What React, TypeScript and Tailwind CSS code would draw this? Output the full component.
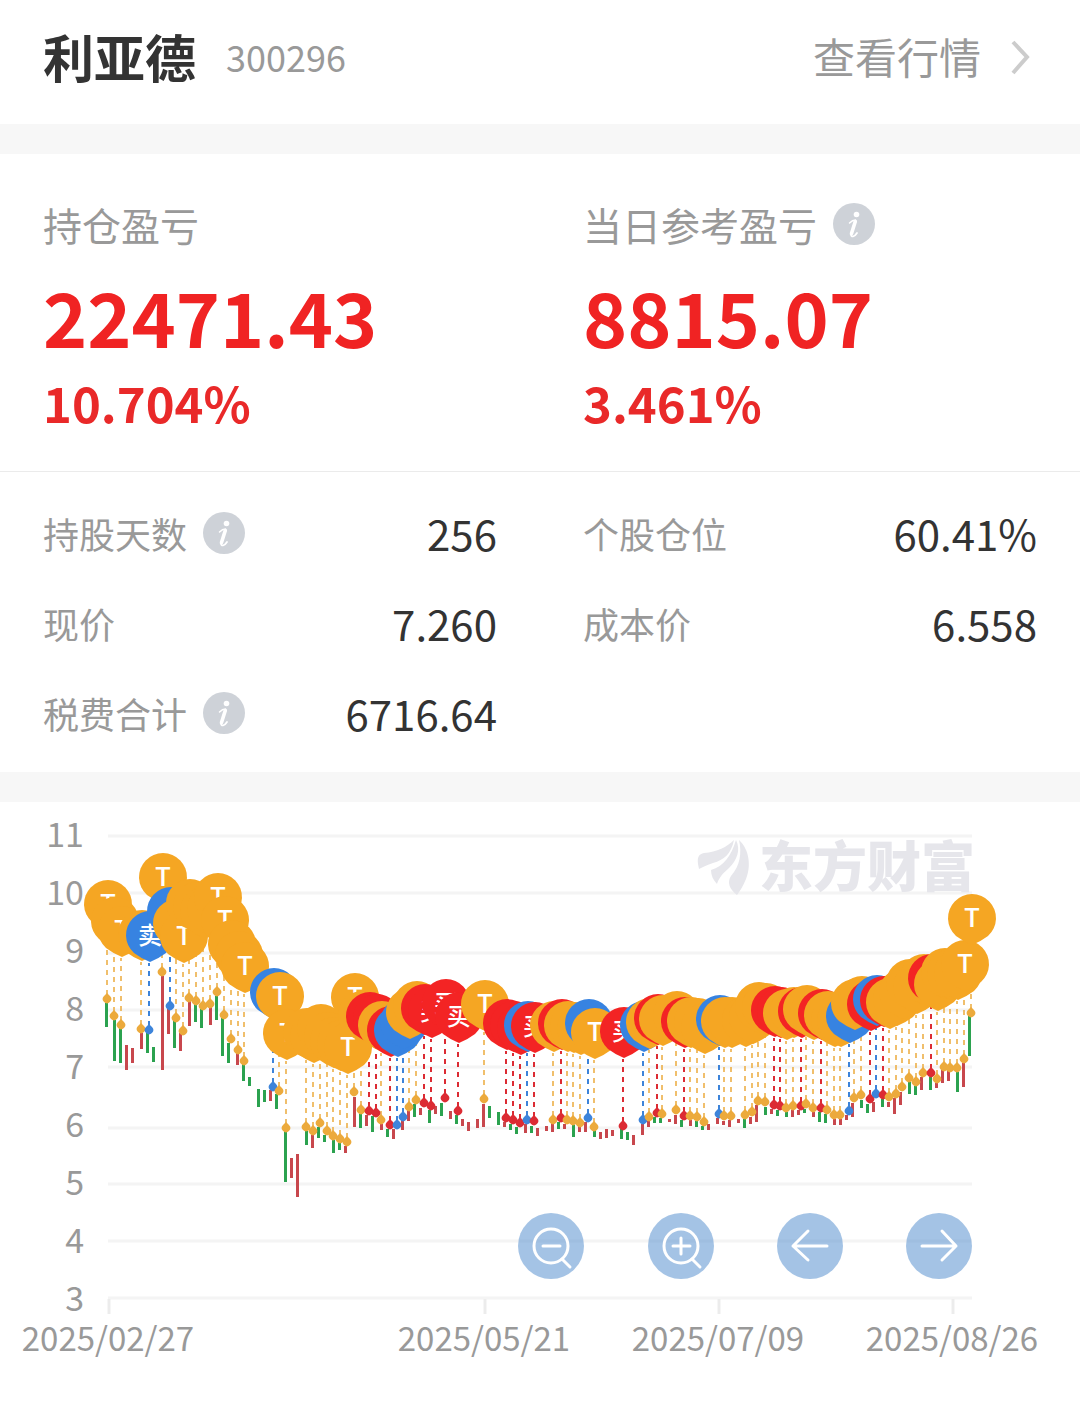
import React from "react";

type Side = "T" | "B" | "S";
type Tone = "r" | "g";

// Session bars: [x, top, bottom, tone]
const bars: [number, number, number, Tone][] = [
  [107, 1003, 1027, "g"], [115, 1020, 1061, "g"], [121, 1028, 1063, "g"], [127, 1045, 1070, "r"],
  [133, 1048, 1063, "r"], [142, 1033, 1049, "r"], [148, 1033, 1053, "g"], [154, 1047, 1062, "g"],
  [163, 976, 1070, "r"], [169, 1008, 1034, "r"], [175, 1021, 1048, "g"], [181, 1033, 1051, "r"],
  [190, 1001, 1026, "r"], [196, 1003, 1022, "g"], [202, 1008, 1028, "g"], [211, 1007, 1025, "r"],
  [217, 996, 1020, "g"], [223, 1018, 1056, "g"], [229, 1043, 1063, "g"], [238, 1053, 1065, "r"],
  [244, 1064, 1081, "g"], [250, 1077, 1086, "g"], [259, 1089, 1107, "g"], [265, 1090, 1102, "g"],
  [271, 1090, 1101, "r"], [277, 1094, 1109, "g"], [286, 1131, 1182, "g"], [292, 1158, 1178, "r"],
  [298, 1154, 1197, "r"], [307, 1131, 1145, "g"], [313, 1135, 1148, "r"], [319, 1127, 1138, "g"],
  [325, 1135, 1142, "g"], [334, 1140, 1153, "g"], [340, 1143, 1150, "g"], [346, 1146, 1153, "r"],
  [355, 1097, 1127, "r"], [361, 1114, 1128, "g"], [367, 1115, 1126, "r"], [373, 1116, 1132, "g"],
  [382, 1124, 1130, "r"], [388, 1129, 1137, "g"], [394, 1129, 1139, "r"], [403, 1120, 1130, "r"],
  [409, 1110, 1121, "r"], [415, 1104, 1117, "g"], [421, 1108, 1115, "r"], [430, 1110, 1123, "g"],
  [436, 1106, 1114, "r"], [442, 1103, 1116, "g"], [451, 1111, 1119, "r"], [457, 1115, 1124, "g"],
  [463, 1119, 1126, "r"], [469, 1122, 1131, "r"], [478, 1119, 1128, "r"], [484, 1104, 1127, "r"],
  [490, 1106, 1118, "g"], [499, 1112, 1125, "g"], [505, 1122, 1127, "r"], [511, 1124, 1130, "g"],
  [517, 1127, 1134, "g"], [526, 1124, 1133, "r"], [532, 1126, 1133, "g"], [538, 1128, 1136, "r"],
  [547, 1126, 1131, "r"], [553, 1123, 1132, "r"], [559, 1122, 1129, "g"], [565, 1124, 1129, "r"],
  [574, 1125, 1137, "g"], [580, 1126, 1132, "r"], [586, 1122, 1132, "r"], [595, 1130, 1137, "g"],
  [601, 1132, 1139, "r"], [607, 1129, 1138, "r"], [613, 1130, 1136, "r"], [622, 1129, 1139, "g"],
  [628, 1132, 1140, "g"], [634, 1135, 1145, "r"], [643, 1124, 1135, "r"], [649, 1121, 1127, "r"],
  [655, 1117, 1123, "g"], [661, 1118, 1123, "g"], [670, 1119, 1122, "r"], [676, 1115, 1124, "r"],
  [682, 1120, 1127, "g"], [691, 1120, 1126, "r"], [697, 1121, 1127, "g"], [703, 1126, 1130, "g"],
  [709, 1124, 1130, "r"], [718, 1118, 1124, "r"], [724, 1121, 1125, "r"], [730, 1120, 1127, "r"],
  [739, 1119, 1123, "r"], [745, 1119, 1128, "g"], [751, 1117, 1124, "r"], [757, 1105, 1122, "r"],
  [766, 1107, 1115, "g"], [772, 1109, 1114, "r"], [778, 1110, 1116, "g"], [787, 1112, 1117, "g"],
  [793, 1110, 1117, "r"], [799, 1110, 1115, "r"], [805, 1109, 1113, "g"], [814, 1112, 1117, "r"],
  [820, 1112, 1122, "g"], [826, 1114, 1123, "g"], [835, 1119, 1125, "r"], [841, 1119, 1125, "r"],
  [847, 1115, 1120, "r"], [853, 1103, 1117, "r"], [862, 1100, 1108, "g"], [868, 1104, 1113, "g"],
  [874, 1102, 1112, "r"], [883, 1099, 1107, "g"], [889, 1102, 1107, "r"], [895, 1098, 1114, "r"],
  [901, 1092, 1105, "r"], [910, 1082, 1094, "g"], [916, 1086, 1095, "g"], [922, 1077, 1090, "r"],
  [931, 1077, 1090, "g"], [937, 1083, 1088, "r"], [943, 1070, 1083, "r"], [949, 1071, 1081, "r"],
  [958, 1072, 1092, "g"], [964, 1063, 1087, "r"], [970, 1016, 1056, "g"],
];

// Trade marks: [x, y of the session high, side]
const trades: [number, number, Side][] = [
  [107, 999, "T"], [114, 1016, "T"], [121, 1025, "T"], [141, 1029, "T"], [149, 1030, "S"],
  [162, 972, "T"], [170, 1006, "S"], [176, 1018, "T"], [183, 1031, "T"], [189, 998, "T"],
  [196, 1001, "T"], [203, 1006, "T"], [210, 1004, "T"], [217, 992, "T"], [224, 1015, "T"],
  [231, 1039, "T"], [238, 1050, "T"], [244, 1061, "T"], [273, 1087, "S"], [279, 1091, "T"],
  [286, 1128, "T"], [306, 1127, "T"], [313, 1131, "T"], [320, 1123, "T"], [327, 1131, "T"],
  [333, 1136, "T"], [340, 1139, "T"], [347, 1142, "T"], [354, 1092, "T"], [361, 1110, "T"],
  [369, 1111, "B"], [376, 1113, "B"], [381, 1120, "T"], [390, 1125, "B"], [397, 1125, "S"],
  [403, 1117, "S"], [409, 1107, "T"], [416, 1100, "T"], [424, 1103, "B"], [431, 1106, "B"],
  [445, 1098, "B"], [458, 1111, "B"], [484, 1099, "T"], [506, 1118, "B"], [513, 1120, "B"],
  [520, 1123, "B"], [527, 1120, "S"], [534, 1121, "B"], [553, 1120, "T"], [561, 1118, "B"],
  [567, 1120, "T"], [573, 1121, "T"], [580, 1123, "T"], [588, 1118, "S"], [594, 1127, "T"],
  [623, 1126, "B"], [643, 1120, "S"], [649, 1117, "T"], [657, 1113, "B"], [662, 1114, "T"],
  [676, 1110, "T"], [684, 1116, "B"], [690, 1116, "T"], [697, 1117, "T"], [704, 1122, "T"],
  [719, 1114, "S"], [724, 1116, "T"], [731, 1116, "T"], [745, 1115, "T"], [752, 1112, "T"],
  [758, 1101, "T"], [765, 1102, "T"], [774, 1105, "B"], [780, 1106, "B"], [786, 1108, "T"],
  [793, 1106, "T"], [801, 1106, "B"], [806, 1104, "T"], [813, 1108, "T"], [821, 1108, "B"],
  [827, 1110, "T"], [834, 1115, "T"], [840, 1115, "T"], [849, 1111, "S"], [854, 1098, "T"],
  [861, 1095, "T"], [870, 1099, "B"], [876, 1094, "S"], [883, 1095, "B"], [889, 1097, "T"],
  [896, 1094, "T"], [902, 1087, "T"], [909, 1078, "T"], [916, 1082, "T"], [923, 1073, "T"],
  [931, 1073, "B"], [937, 1079, "T"], [944, 1067, "T"], [950, 1068, "T"], [957, 1068, "T"],
  [964, 1059, "T"], [971, 1013, "T"],
];

const gridLines = [836, 893, 953, 1010, 1067, 1128, 1184, 1241, 1298];
const dates: [number, string][] = [
  [108, "2025/02/27"], [484, "2025/05/21"], [718, "2025/07/09"], [952, "2025/08/26"],
];

const pinFill: Record<Side, string> = { T: "#f5a623", B: "#f32424", S: "#3783e1" };
const stemFill: Record<Side, string> = { T: "#ecaa3c", B: "#dc2b33", S: "#3d84da" };
const pinLabel: Record<Side, string> = { T: "T", B: "买", S: "卖" };
const PIN_RISE = 95;
const PIN_RADIUS = 24;

// A pin's letter is drawn only when later pins leave enough of it in view.
function labelShows(index: number) {
  const [x, y, side] = trades[index];
  const later = trades.slice(index + 1);
  const points: [number, number][] =
    side === "T"
      ? [[-7, -8], [-3, -8], [0, -8], [3, -8], [7, -8], [0, -4], [0, 0], [0, 4], [0, 8]]
      : [-10, 0, 10].flatMap((dx) => [-10, 0, 10].map((dy): [number, number] => [dx, dy]));
  const open = points.filter(([dx, dy]) =>
    later.every(([lx, ly]) => Math.hypot(x + dx - lx, y + dy - ly) > PIN_RADIUS),
  );
  return open.length >= 2;
}

function Pin({ x, y, side, labelled }: { x: number; y: number; side: Side; labelled: boolean }) {
  return (
    <g transform={`translate(${x + 1} ${y - PIN_RISE})`}>
      <path d="M0 27Q-8 24-16 18A24 24 0 1 1 16 18Q8 24 0 27Z" fill={pinFill[side]} />
      {labelled && (
        <text y="9" textAnchor="middle" fill="#fff" fontWeight="500" fontSize={side === "T" ? 26 : 24}>
          {pinLabel[side]}
        </text>
      )}
    </g>
  );
}

function Chart() {
  return (
    <svg viewBox="0 802 1080 601" className="block w-full" role="img" aria-label="持仓走势图">
      {gridLines.map((y) => (
        <path key={y} d={`M108 ${y}H972`} stroke="#f4f4f4" strokeWidth="3" />
      ))}
      {dates.map(([x]) => (
        <path key={x} d={`M${x + 1} 1299V1314`} stroke="#ececec" strokeWidth="3" />
      ))}
      <g fill="#999" fontSize="34">
        {gridLines.map((y, i) => (
          <text key={y} x="84" y={847 + i * 58} textAnchor="end">{11 - i}</text>
        ))}
      </g>
      <g fill="#999" fontSize="33">
        {dates.map(([x, d]) => (
          <text key={d} x={x} y="1351" textAnchor="middle">{d}</text>
        ))}
      </g>
      <g fill="#e6e6eb">
        <path d="M698 864C697 857 699 854 704 853C717 852 727 847 734 840C731 854 724 860 713 863C707 865 703 867 699 869Z" />
        <path d="M711 870C724 866 731 856 736 840C741 850 737 860 729 868C722 874 719 878 717 884C713 880 711 875 711 870Z" />
        <path d="M739 840C750 850 751 867 746 879C743 886 740 891 737 895C729 889 727 882 731 876C740 866 742 853 739 840Z" />
        <text x="759" y="887" fontSize="54" fontWeight="900">东方财富</text>
      </g>
      {trades.map(([x, y, side]) => (
        <path
          key={x}
          d={`M${x} ${y - 4}V${y - PIN_RISE + 28}`}
          stroke={stemFill[side]}
          strokeWidth={side === "T" ? 1.5 : 2}
          strokeDasharray="5 5"
        />
      ))}
      {bars.map(([x, top, bottom, tone]) => (
        <rect key={x} x={x - 2} y={top} width="3" height={bottom - top} fill={tone === "r" ? "#c8474d" : "#2ba24f"} />
      ))}
      {trades.map(([x, y, side]) => (
        <path
          key={x}
          d={`M${x} ${y - 6}L${x + 3} ${y - 3}A4.2 4.2 0 1 1 ${x - 3} ${y - 3}Z`}
          fill={stemFill[side]}
        />
      ))}
      {trades.map(([x, y, side], i) => (
        <Pin key={x} x={x} y={y} side={side} labelled={labelShows(i)} />
      ))}
    </svg>
  );
}

function InfoButton({ label }: { label: string }) {
  return (
    <button type="button" aria-label={`${label}说明`} className="size-[42px] shrink-0 rounded-full bg-[#ced2d8]">
      <svg viewBox="0 0 42 42" className="size-full" fill="none" stroke="#fff" strokeLinecap="round">
        <circle cx="23.500" cy="11.500" r="2.800" fill="#fff" stroke="none" />
        <path d="M16.500 20C18.500 18 20.500 17 22.500 17" strokeWidth="1.500" />
        <path d="M22.300 18.500L18.500 30.500" strokeWidth="3.600" />
        <path d="M18 31.500C18 34.500 21.500 34 24 30" strokeWidth="1.800" />
      </svg>
    </button>
  );
}

function Summary({ label, amount, percent, info }: { label: string; amount: string; percent: string; info?: boolean }) {
  return (
    <div className="px-[43px]">
      <div className="flex h-14 items-center gap-4 text-[39px] text-[#999]">
        <span>{label}</span>
        {info && <InfoButton label={label} />}
      </div>
      <div className="mt-4 text-[75px] leading-24 font-bold text-[#f02323]">{amount}</div>
      <div className="mt-0.5 text-[49px] leading-[72px] font-bold text-[#e92929]">{percent}</div>
    </div>
  );
}

function Stat({ label, value, info }: { label: string; value: string; info?: boolean }) {
  return (
    <div className="flex h-[90px] items-center justify-between px-[43px]">
      <dt className="flex items-center gap-4 text-4xl text-[#999]">
        {label}
        {info && <InfoButton label={label} />}
      </dt>
      <dd className="text-[42px] text-[#333]">{value}</dd>
    </div>
  );
}

function ToolButton({ label, children }: { label: string; children: React.ReactNode }) {
  return (
    <button type="button" aria-label={label} className="size-[66px] rounded-full bg-[#4a87cb]/50">
      <svg viewBox="0 0 66 66" className="size-full" fill="none" stroke="#fff" strokeWidth="3" strokeLinecap="round" strokeLinejoin="round">
        {children}
      </svg>
    </button>
  );
}

export default function App() {
  return (
    <main className="min-h-screen bg-white font-['Noto_Sans_CJK_SC',sans-serif] leading-none">
      <header className="flex h-[124px] items-center justify-between px-[43px] pb-3">
        <div className="flex items-center gap-[30px]">
          <h1 className="text-[51px] font-bold text-[#333]">利亚德</h1>
          <span className="text-4xl text-[#999]">300296</span>
        </div>
        <a href="#quote" className="flex items-center gap-6 text-[42px] text-[#999]">
          查看行情
          <svg viewBox="0 0 32 40" className="h-10 w-8" fill="none" stroke="#ccc" strokeWidth="4">
            <path d="M8 6L22 21L8 37" />
          </svg>
        </a>
      </header>
      <div className="h-[30px] bg-[#f7f7f7]" />
      <section className="grid grid-cols-2 border-b border-[#ebebeb] pt-[42px] pb-[33px]">
        <Summary label="持仓盈亏" amount="22471.43" percent="10.704%" />
        <Summary label="当日参考盈亏" amount="8815.07" percent="3.461%" info />
      </section>
      <dl className="grid grid-cols-2 pt-4 pb-[14px]">
        <Stat label="持股天数" value="256" info />
        <Stat label="个股仓位" value="60.41%" />
        <Stat label="现价" value="7.260" />
        <Stat label="成本价" value="6.558" />
        <Stat label="税费合计" value="6716.64" info />
      </dl>
      <div className="h-[30px] bg-[#f7f7f7]" />
      <section className="relative">
        <Chart />
        <div className="absolute right-[10%] bottom-[124px] left-[48%] flex justify-between">
          <ToolButton label="缩小">
            <circle cx="33" cy="33" r="17" />
            <path d="M25 33H42M44 46L52 54" />
          </ToolButton>
          <ToolButton label="放大">
            <circle cx="33" cy="33" r="17" />
            <path d="M25 33H42M33 25V41M44 46L52 54" />
          </ToolButton>
          <ToolButton label="向左">
            <path d="M50 33H16M31 18L16 33L31 47" />
          </ToolButton>
          <ToolButton label="向右">
            <path d="M16 33H50M36 18L50 33L36 47" />
          </ToolButton>
        </div>
      </section>
    </main>
  );
}
